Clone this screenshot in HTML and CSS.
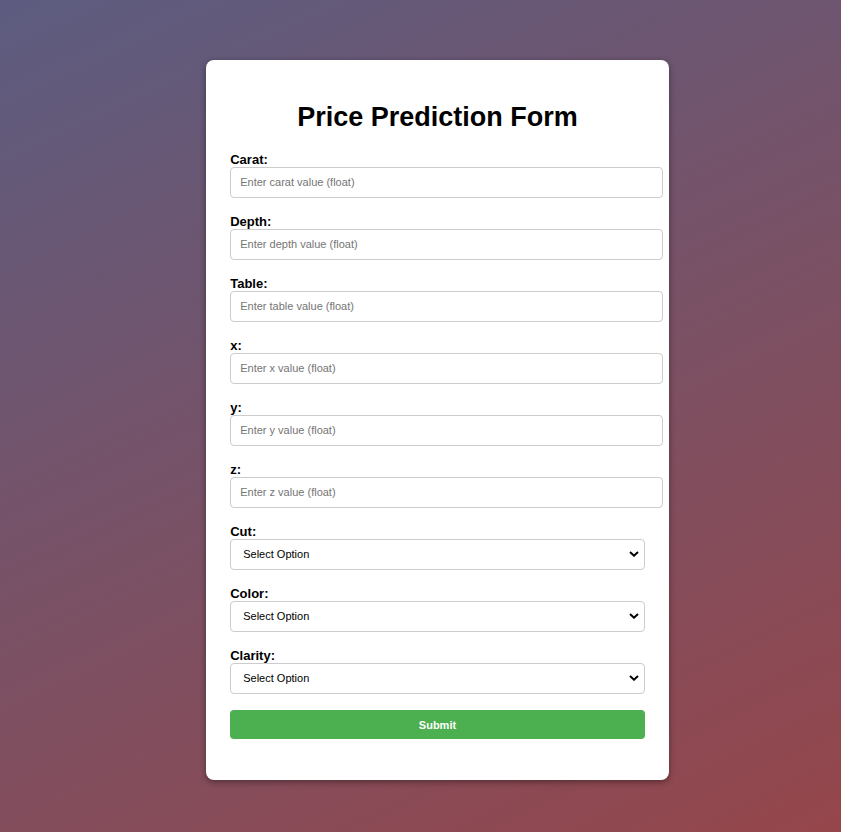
FILE: index.html
```html
<!DOCTYPE html>
<html lang="en">
<head>
<meta charset="utf-8">
<meta name="viewport" content="width=device-width, initial-scale=1">
<title>Price Prediction Form</title>
<link rel="stylesheet" href="styles.css">
</head>
<body>
<main class="card">
  <h1 class="title">Price Prediction Form</h1>
  <form class="form">
    <div class="field"><label for="carat">Carat:</label><input class="control text" type="text" id="carat" name="carat" placeholder="Enter carat value (float)"></div>
    <div class="field"><label for="depth">Depth:</label><input class="control text" type="text" id="depth" name="depth" placeholder="Enter depth value (float)"></div>
    <div class="field"><label for="table">Table:</label><input class="control text" type="text" id="table" name="table" placeholder="Enter table value (float)"></div>
    <div class="field"><label for="x">x:</label><input class="control text" type="text" id="x" name="x" placeholder="Enter x value (float)"></div>
    <div class="field"><label for="y">y:</label><input class="control text" type="text" id="y" name="y" placeholder="Enter y value (float)"></div>
    <div class="field"><label for="z">z:</label><input class="control text" type="text" id="z" name="z" placeholder="Enter z value (float)"></div>
    <div class="field">
      <label for="cut">Cut:</label>
      <div class="picker">
        <select class="control select" id="cut" name="cut"><option>Select Option</option></select>
        <svg class="arrow" viewBox="0 0 10 6" aria-hidden="true"><path d="M1 1l4 3.7L9 1"/></svg>
      </div>
    </div>
    <div class="field">
      <label for="color">Color:</label>
      <div class="picker">
        <select class="control select" id="color" name="color"><option>Select Option</option></select>
        <svg class="arrow" viewBox="0 0 10 6" aria-hidden="true"><path d="M1 1l4 3.7L9 1"/></svg>
      </div>
    </div>
    <div class="field">
      <label for="clarity">Clarity:</label>
      <div class="picker">
        <select class="control select" id="clarity" name="clarity"><option>Select Option</option></select>
        <svg class="arrow" viewBox="0 0 10 6" aria-hidden="true"><path d="M1 1l4 3.7L9 1"/></svg>
      </div>
    </div>
    <button class="submit" type="submit">Submit</button>
  </form>
</main>
</body>
</html>
```
FILE: styles.css
```css
body {
  display: flex;
  align-items: center;
  box-sizing: border-box;
  min-height: 100vh;
  margin: 0;
  padding: 8px 0 0 34px;
  font: 13px/15px "Liberation Sans", Arial, sans-serif;
  color: #000;
  background: linear-gradient(155deg, #5c5c80, #95464b);
}

.card {
  box-sizing: border-box;
  width: 55vw;
  margin: 0 auto;
  padding: 40px 24px;
  background: #fff;
  border-radius: 8px;
  box-shadow: 0 2px 6px rgba(0, 0, 0, 0.4);
}

.title {
  margin: 0 0 18px;
  font-size: 27px;
  line-height: 34px;
  text-align: center;
}

.form {
  padding-bottom: 1px;
}

.field {
  margin-bottom: 16px;
}

.field label {
  display: block;
  font-weight: bold;
}

.control {
  display: block;
  box-sizing: border-box;
  width: 100%;
  height: 31px;
  padding: 7px 9px 9px;
  border: 1px solid #ccc;
  border-radius: 4px;
  background-color: #fff;
  color: #000;
  font: 11px "Liberation Sans", Arial, sans-serif;
}

.text {
  width: calc(100% + 18px);
}

.picker {
  position: relative;
}

.select {
  appearance: none;
  padding: 7px 20px 9px 12px;
}

.arrow {
  position: absolute;
  top: 12px;
  right: 6px;
  width: 10px;
  height: 6px;
  fill: none;
  stroke: #000;
  stroke-width: 2;
  pointer-events: none;
}

.submit {
  display: block;
  width: 100%;
  height: 29px;
  padding: 0;
  border: 0;
  border-radius: 4px;
  background: #4caf50;
  color: #fff;
  font: bold 11px "Liberation Sans", Arial, sans-serif;
}
```
